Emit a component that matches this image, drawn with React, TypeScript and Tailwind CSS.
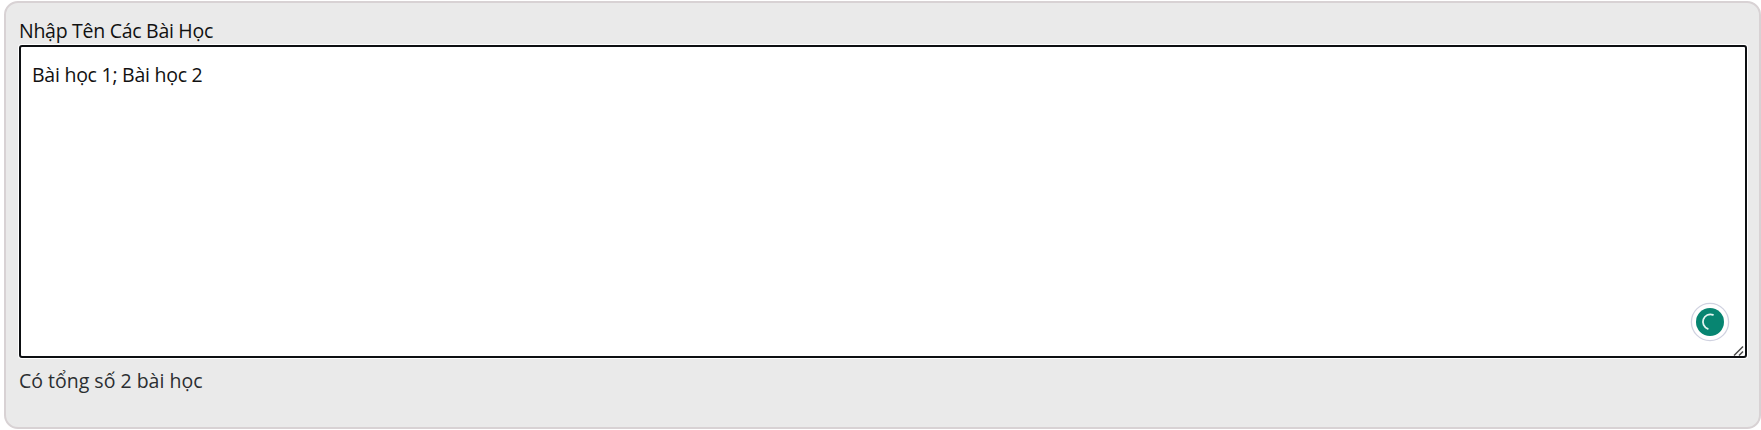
import { useState } from "react";

function SpinnerBadge() {
  return (
    <svg
      className="absolute right-[17px] bottom-[16px] h-[40px] w-[40px]"
      viewBox="0 0 40 40"
      fill="none"
    >
      <circle cx="20" cy="20" r="18.6" fill="#fff" stroke="#d0d2e0" strokeWidth="1.3" />
      <circle cx="20" cy="20" r="14" fill="#078571" />
      <path d="M23 12.8A7.4 7.4 0 1 0 17.8 26.8" stroke="#e3f5f1" strokeWidth="1.8" strokeLinecap="round" />
    </svg>
  );
}

function ResizeGrip() {
  return (
    <svg className="absolute right-[3px] bottom-[2px] h-[11px] w-[11px]" viewBox="0 0 11 11" fill="none">
      <path d="M1 10.5L10 1.5M6 10.5L10 6.5" stroke="#4a4a4a" strokeWidth="1.5" />
    </svg>
  );
}

export default function App() {
  const [text, setText] = useState("Bài học 1; Bài học 2");
  const count = text.split(";").filter((part) => part.trim()).length;

  return (
    <div className="h-[430px] bg-white pt-px pl-1 font-['Open_Sans',sans-serif] text-[19.5px] text-[#111]">
      <div className="flex h-[428px] flex-col rounded-[14px] border-2 border-[#d8d2d4] bg-[#eaeaea] pt-[14px] pr-[11px] pl-3">
        <label htmlFor="lessons" className="h-[27px] pl-px leading-[27px] tracking-[-0.28px]">
          Nhập Tên Các Bài Học
        </label>
        <div className="relative h-[315px] rounded-[3px] border border-white bg-white">
          <textarea
            id="lessons"
            value={text}
            onChange={(event) => setText(event.target.value)}
            spellCheck={false}
            className="block h-full w-full resize-none rounded-[3px] border-2 border-[#0d0f12] bg-white px-[11px] pt-[14px] leading-[27px] tracking-[-0.25px] outline-none"
          />
          <ResizeGrip />
          <SpinnerBadge />
        </div>
        <p className="mt-[8px] pl-px leading-[27px] text-[#2b2e31]">Có tổng số {count} bài học</p>
      </div>
    </div>
  );
}
